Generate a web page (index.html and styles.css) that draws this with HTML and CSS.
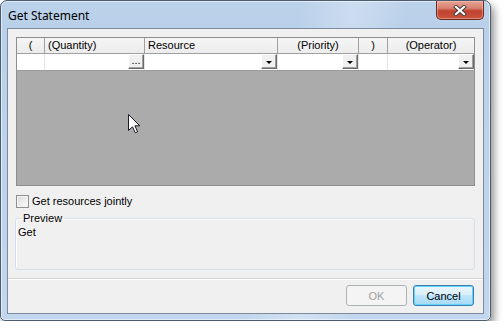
FILE: index.html
```html
<!DOCTYPE html>
<html lang="en">
<head>
  <meta charset="UTF-8" />
  <title>Get Statement</title>
  <link rel="stylesheet" href="styles.css">
</head>
<body>
  <div class="window">
    <div class="titlebar">
      <span class="title">Get Statement</span>
      <button class="close-btn" aria-label="Close">
        <svg width="14" height="11" viewBox="0 0 14 11">
          <path d="M3 2 L11 9 M11 2 L3 9" stroke="#3b3b3b" stroke-width="4" stroke-linecap="square" fill="none"/>
          <path d="M3 2 L11 9 M11 2 L3 9" stroke="#ffffff" stroke-width="2.2" stroke-linecap="square" fill="none"/>
        </svg>
      </button>
    </div>

    <div class="client">
      <div class="grid">
        <div class="grid-head">
          <div class="hcell center">(</div>
          <div class="hcell">(Quantity)</div>
          <div class="hcell">Resource</div>
          <div class="hcell center">(Priority)</div>
          <div class="hcell center">)</div>
          <div class="hcell center last">(Operator)</div>
        </div>
        <div class="grid-row">
          <div class="dcell"></div>
          <div class="dcell"><span class="cell-btn dots">...</span></div>
          <div class="dcell"><span class="cell-btn"><i class="arrow"></i></span></div>
          <div class="dcell"><span class="cell-btn"><i class="arrow"></i></span></div>
          <div class="dcell"></div>
          <div class="dcell last"><span class="cell-btn"><i class="arrow"></i></span></div>
        </div>
        <div class="grid-empty">
          <svg class="cursor" width="13" height="20" viewBox="0 0 13 20">
            <path d="M0.5 0.5 L0.5 16.5 L4.5 12.8 L7.3 18.8 L9.6 17.8 L6.9 11.8 L11.8 11.8 Z" fill="#ffffff" stroke="#1a1a2a" stroke-width="1"/>
          </svg>
        </div>
      </div>

      <label class="check">
        <span class="check-box"></span>
        Get resources jointly
      </label>

      <fieldset class="preview">
        <legend>Preview</legend>
        <div class="preview-text">Get</div>
      </fieldset>

      <div class="footer">
        <button class="btn" disabled>OK</button>
        <button class="btn btn-default">Cancel</button>
      </div>
    </div>
  </div>
</body>
</html>
```

FILE: styles.css
```css
* {
  box-sizing: border-box;
}

body {
  margin: 0;
  background: #ffffff;
  font-family: "Liberation Sans", Arial, sans-serif;
  font-size: 11px;
  color: #000;
}

.window {
  width: 491px;
  height: 321px;
  display: flex;
  flex-direction: column;
  padding: 0 6px 6px 6px;
  border: 1px solid #4d5d70;
  border-radius: 7px 7px 5px 5px;
  background:
    linear-gradient(100deg, rgba(255,255,255,0) 55%, rgba(255,255,255,0.25) 65%, rgba(255,255,255,0) 75%),
    linear-gradient(180deg, #bcd2ea 0%, #b9d0ea 30px, #c2d7ee 100%);
  box-shadow: 3px 5px 8px rgba(0, 0, 0, 0.45), inset 0 0 0 1px rgba(255,255,255,0.55);
}

.titlebar {
  height: 27px;
  display: flex;
  align-items: flex-start;
}

.title {
  font-family: "Noto Sans", "Open Sans", sans-serif;
  font-size: 12px;
  line-height: 14px;
  margin-top: 8px;
  padding-left: 1px;
  color: #000;
}

.close-btn {
  margin-left: auto;
  width: 48px;
  height: 19px;
  padding: 0;
  border: 1px solid #6b2a22;
  border-top: none;
  border-radius: 0 0 5px 5px;
  background: linear-gradient(180deg, #e7a595 0%, #d8806f 40%, #c04330 55%, #c9553d 100%);
  box-shadow: inset 0 0 0 1px rgba(255, 200, 190, 0.45);
  display: flex;
  align-items: center;
  justify-content: center;
}

.client {
  flex: 1;
  display: flex;
  flex-direction: column;
  padding: 0 8px;
  background: #f0f0f0;
  border: 1px solid #7c8a9b;
}

/* table */
.grid {
  margin-top: 8px;
  height: 149px;
  border: 1px solid #8e8e8e;
  display: flex;
  flex-direction: column;
}

.grid-head,
.grid-row {
  display: grid;
  grid-template-columns: 28px 100px 133px 81px 29px 1fr;
}

.grid-head {
  height: 16px;
  background: linear-gradient(180deg, #f5f5f5, #ececec);
  border-bottom: 1px solid #a0a0a0;
}

.hcell {
  line-height: 15px;
  padding-left: 3px;
  border-right: 1px solid #a0a0a0;
  white-space: nowrap;
}

.hcell.center {
  text-align: center;
  padding-left: 0;
}

.hcell.last,
.dcell.last {
  border-right: none;
}

.grid-row {
  height: 17px;
  background: #ffffff;
  border-bottom: 1px solid #9a9a9a;
}

.dcell {
  border-right: 1px solid #e4e4e4;
  display: flex;
  justify-content: flex-end;
  align-items: flex-end;
  padding: 0 0 1px 0;
}

.cell-btn {
  width: 16px;
  height: 15px;
  background: #f0f0f0;
  border: 1px solid;
  border-color: #ffffff #696969 #696969 #ffffff;
  box-shadow: inset -1px -1px 0 #a0a0a0;
  display: flex;
  align-items: center;
  justify-content: center;
}

.cell-btn.dots {
  font-size: 11px;
  line-height: 9px;
  letter-spacing: 0;
  align-items: flex-end;
  padding-bottom: 3px;
}

.arrow {
  width: 0;
  height: 0;
  border-left: 3px solid transparent;
  border-right: 3px solid transparent;
  border-top: 3px solid #000;
  margin-top: 2px;
}

.grid-empty {
  flex: 1;
  position: relative;
  background: #ababab;
}

.cursor {
  position: absolute;
  left: 111px;
  top: 43px;
}

/* checkbox */
.check {
  margin-top: 9px;
  height: 13px;
  display: flex;
  align-items: center;
  gap: 3px;
  line-height: 13px;
}

.check-box {
  width: 13px;
  height: 13px;
  border: 1px solid #8e8f8f;
  background: linear-gradient(135deg, #dcdcdc, #fbfbfb);
  box-shadow: inset 0 0 0 1px #f4f4f4;
}

/* preview group */
.preview {
  margin: 4px 0 0 -1px;
  height: 58px;
  padding: 0 2px;
  border: 1px solid #d5dfe5;
  border-radius: 3px;
  box-shadow: inset 1px 1px 0 #ffffff;
}

.preview legend {
  padding: 0 2px;
  margin-left: 3px;
  line-height: 13px;
}

.preview-text {
  line-height: 13px;
  margin-top: 1px;
}

/* buttons */
.footer {
  margin: auto -8px 0;
  height: 35px;
  border-top: 1px solid #d5d5d5;
  box-shadow: inset 0 1px 0 #ffffff;
  display: flex;
  justify-content: flex-end;
  gap: 6px;
  padding: 6px 9px 0 0;
}

.btn {
  width: 61px;
  height: 21px;
  font-family: "Liberation Sans", Arial, sans-serif;
  font-size: 11px;
  color: #000;
  border: 1px solid #707070;
  border-radius: 3px;
  background: linear-gradient(180deg, #f2f2f2 0%, #ebebeb 45%, #dddddd 50%, #cfcfcf 100%);
  padding: 0;
}

.btn:disabled {
  color: #a0a0a0;
  border-color: #adb2b5;
  background: #f4f4f4;
}

.btn-default {
  border-color: #3c7fb1;
  background: linear-gradient(180deg, #eaf6fd 0%, #d9f0fc 45%, #bee6fd 50%, #a7d9f5 100%);
  box-shadow: inset 0 0 0 1px #5fd3fb;
}
```
